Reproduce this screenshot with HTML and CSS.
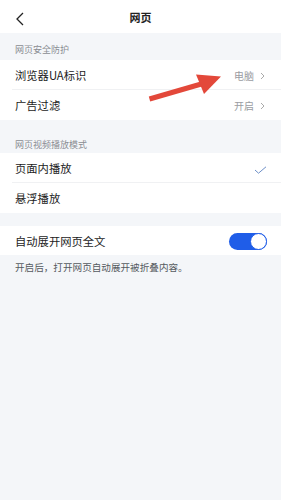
FILE: index.html
```html
<!DOCTYPE html>
<html lang="zh">
<head>
<meta charset="utf-8">
<link rel="stylesheet" href="styles.css">
</head>
<body>
<div class="page">
  <header class="topbar">
    <svg class="back" width="10" height="14" viewBox="0 0 10 14"><path d="M8 1 L2 7 L8 13" fill="none" stroke="#222" stroke-width="1.3"/></svg>
    <div class="title">网页</div>
  </header>

  <div class="label first">网页安全防护</div>
  <div class="group">
    <div class="row sep">
      <span class="name">浏览器UA标识</span>
      <span class="value">电脑<svg class="chev" width="5" height="8" viewBox="0 0 5 8"><path d="M1 1 L4 4 L1 7" fill="none" stroke="#aaa" stroke-width="1"/></svg></span>
    </div>
    <div class="row">
      <span class="name">广告过滤</span>
      <span class="value">开启<svg class="chev" width="5" height="8" viewBox="0 0 5 8"><path d="M1 1 L4 4 L1 7" fill="none" stroke="#aaa" stroke-width="1"/></svg></span>
    </div>
  </div>

  <div class="label second">网页视频播放模式</div>
  <div class="group">
    <div class="row sep">
      <span class="name">页面内播放</span>
      <svg class="check" width="13" height="8" viewBox="0 0 13 8"><path d="M1 4 L4.5 7.2 L12 0.8" fill="none" stroke="#6d8fc7" stroke-width="1"/></svg>
    </div>
    <div class="row">
      <span class="name">悬浮播放</span>
    </div>
  </div>

  <div class="gap"></div>
  <div class="group">
    <div class="row tall">
      <span class="name">自动展开网页全文</span>
      <span class="toggle"><span class="knob"></span></span>
    </div>
  </div>
  <div class="note">开启后，打开网页自动展开被折叠内容。</div>

  <svg class="arrow" width="281" height="120" viewBox="0 0 281 120">
    <line x1="149.5" y1="99" x2="203" y2="83.5" stroke="#e3483a" stroke-width="5"/>
    <polygon points="221,76.5 196,74.5 204,94" fill="#e3483a"/>
  </svg>
</div>
</body>
</html>
```
FILE: styles.css
```css
html, body {
  margin: 0;
  padding: 0;
  background: #f4f6f9;
}
body {
  font-family: "Noto Sans CJK SC", "Noto Sans", sans-serif;
  color: #1c1c1c;
  width: 281px;
  height: 500px;
}
.page {
  position: relative;
}
.topbar {
  height: 33px;
  background: #fff;
  display: flex;
  align-items: center;
  justify-content: center;
  position: relative;
}
.back {
  position: absolute;
  left: 15px;
  top: 12px;
}
.title {
  font-size: 11px;
  font-weight: 700;
  color: #222;
  line-height: 1;
  margin-top: 2px;
}
.label {
  font-size: 9px;
  color: #8a8d93;
  padding-left: 15px;
  display: flex;
  align-items: center;
  box-sizing: border-box;
  line-height: 1;
}
.label.first {
  height: 27px;
  padding-top: 6px;
}
.label.second {
  height: 33px;
  padding-top: 15px;
}
.group {
  background: #fff;
}
.row {
  height: 30px;
  display: flex;
  align-items: center;
  justify-content: space-between;
  padding: 2px 14px 0 15px;
  box-sizing: border-box;
  position: relative;
}
.row.sep::after {
  content: "";
  position: absolute;
  left: 12px;
  right: 0;
  bottom: 0;
  height: 1px;
  background: #f0f1f3;
}
.row.tall {
  height: 29px;
}
.name {
  font-size: 11.3px;
  line-height: 1;
}
.value {
  font-size: 10px;
  color: #9a9ca1;
  display: flex;
  align-items: center;
  gap: 6px;
  line-height: 1;
  margin-right: 2px;
}
.check {
  margin-top: 1px;
}
.gap {
  height: 13px;
}
.toggle {
  width: 38px;
  height: 17px;
  border-radius: 9px;
  background: #1f5de8;
  display: flex;
  justify-content: flex-end;
  align-items: center;
  box-sizing: border-box;
  margin-top: -1px;
}
.knob {
  width: 17px;
  height: 17px;
  border-radius: 50%;
  background: #fff;
  border: 1.5px solid #1f5de8;
  box-sizing: border-box;
}
.note {
  font-size: 9.6px;
  color: #555a60;
  padding: 7px 15px 0;
  line-height: 1.2;
}
.arrow {
  position: absolute;
  left: 0;
  top: 0;
  pointer-events: none;
}
```
